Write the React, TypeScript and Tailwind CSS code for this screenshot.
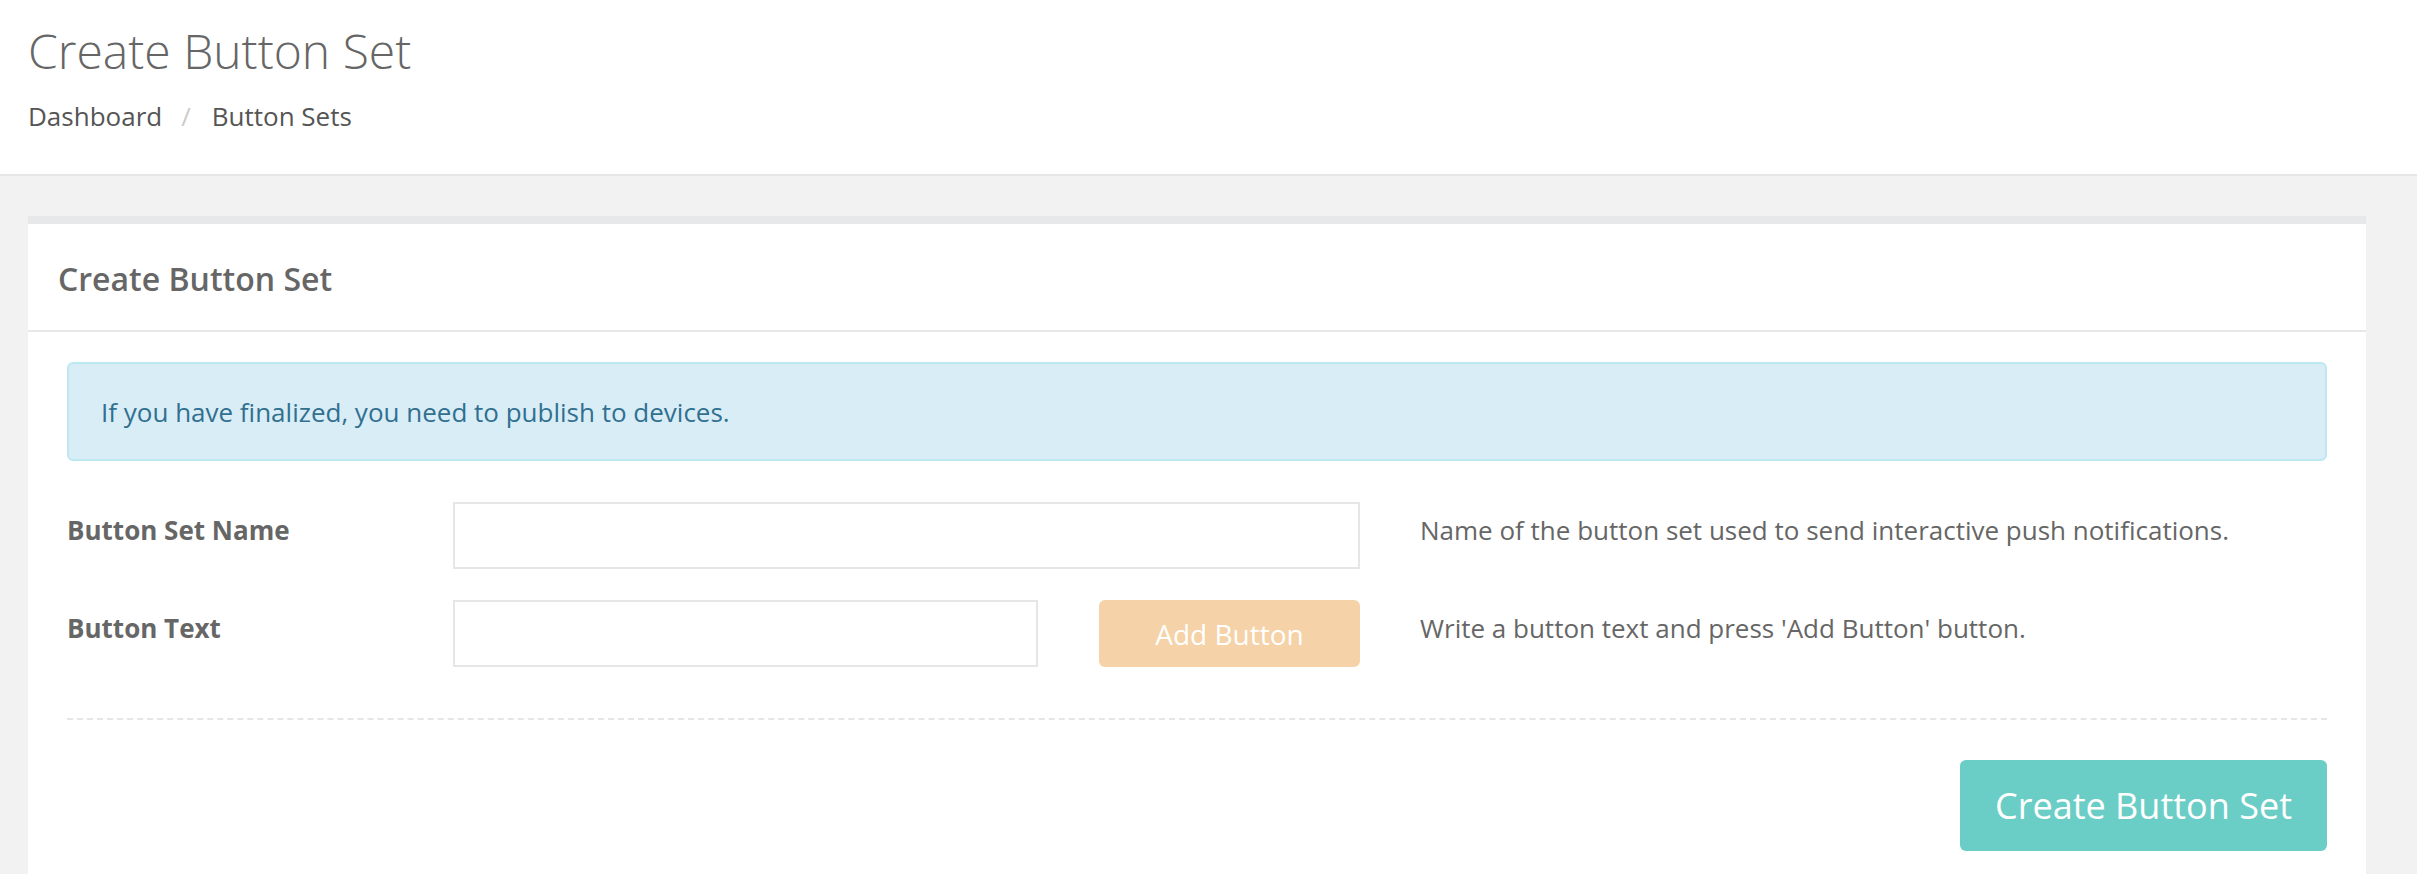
import React from "react";

const font = { fontFamily: '"Open Sans", "Liberation Sans", sans-serif' };

function FormRow({
	label,
	help,
	children,
}: {
	label: string;
	help: string;
	children: React.ReactNode;
}) {
	return (
		<div className="flex items-start">
			<label className="w-[386px] shrink-0 pt-[15px] text-[26px] leading-none font-bold text-[#666]">
				{label}
			</label>
			<div className="w-[907px] shrink-0 flex gap-[61px]">{children}</div>
			<p className="ml-[60px] pt-[15px] text-[26px] leading-none text-[#666]">
				{help}
			</p>
		</div>
	);
}

export default function App() {
	return (
		<div className="min-h-screen bg-[#f2f2f2]" style={font}>
			{/* Page header */}
			<header className="h-[176px] bg-white border-b-2 border-[#e6e6e6] pl-[28px] pt-[27px]">
				<h1 className="text-[48px] leading-none font-light text-[#666]">
					Create Button Set
				</h1>
				<nav className="mt-[28px] flex items-center text-[26px] leading-none text-[#555]">
					<span>Dashboard</span>
					<span className="pl-[19px] pr-[21px] text-[#ccc]">/</span>
					<span>Button Sets</span>
				</nav>
			</header>

			{/* Panel */}
			<section className="ml-[28px] mt-[40px] w-[2338px] bg-white border-t-8 border-[#e7e8e9]">
				<div className="h-[108px] flex items-center pl-[30px] pt-[3px] border-b-2 border-[#e8e8e8]">
					<h2 className="text-[32px] leading-none font-semibold text-[#666]">
						Create Button Set
					</h2>
				</div>

				<div className="px-[39px] pt-[30px] pb-[40px]">
					<div className="h-[99px] flex items-center pl-[32px] rounded-[6px] border-2 border-[#bce8f1] bg-[#d9edf7] text-[26px] leading-none text-[#31708f]">
						If you have finalized, you need to publish to devices.
					</div>

					<div className="mt-[41px] flex flex-col gap-[31px]">
						<FormRow
							label="Button Set Name"
							help="Name of the button set used to send interactive push notifications."
						>
							<input
								type="text"
								className="w-full h-[67px] border-2 border-[#e6e6e6] bg-white px-4 outline-none"
							/>
						</FormRow>
						<FormRow
							label="Button Text"
							help="Write a button text and press 'Add Button' button."
						>
							<input
								type="text"
								className="w-[585px] h-[67px] border-2 border-[#e6e6e6] bg-white px-4 outline-none"
							/>
							<button
								type="button"
								className="flex-1 h-[67px] rounded-[6px] bg-[#f5d2a7] text-[28px] leading-none text-white"
							>
								Add Button
							</button>
						</FormRow>
					</div>

					<div className="mt-[51px] border-t-2 border-dashed border-[#e6e6e6]" />

					<div className="mt-[40px] flex justify-end">
						<button
							type="button"
							className="h-[91px] px-[35px] rounded-[6px] bg-[#6bcec6] text-[36px] leading-none text-white"
						>
							Create Button Set
						</button>
					</div>
				</div>
			</section>
		</div>
	);
}
